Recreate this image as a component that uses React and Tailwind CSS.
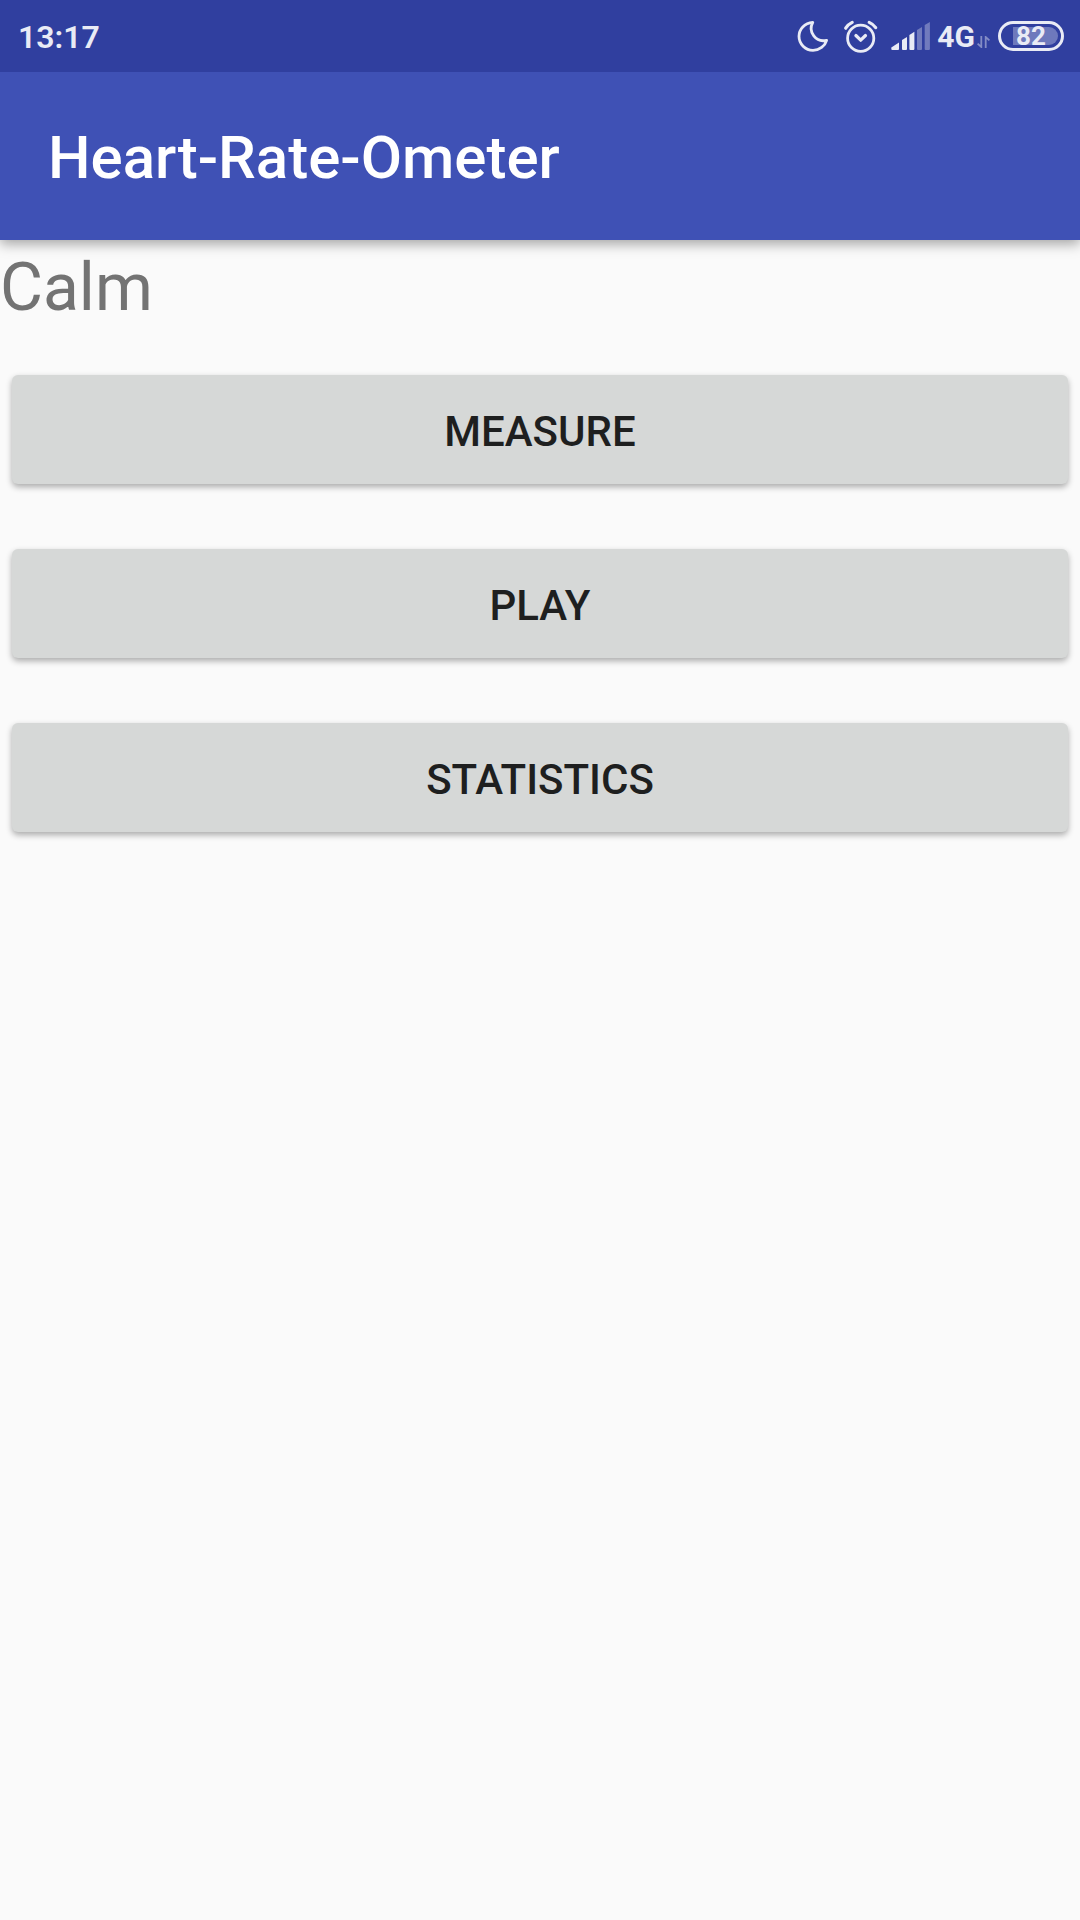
const actions = ["Measure", "Play", "Statistics"];

function MoonIcon() {
  return (
    <svg className="size-9" viewBox="0 0 36 36" fill="none" stroke="currentColor" strokeWidth="2.8" strokeLinejoin="round" role="img" aria-label="Do not disturb">
      <path d="M17.8 4.4C9.5 5 4 11.3 4 18.3C4 26 10.3 32.3 18 32.3C24.5 32.3 30 28 31.6 22.3A12.3 12.3 0 0 1 17.8 4.4Z" />
    </svg>
  );
}

function AlarmIcon() {
  return (
    <svg className="size-9" viewBox="0 0 36 36" fill="none" stroke="currentColor" strokeWidth="2.8" strokeLinecap="round" strokeLinejoin="round" role="img" aria-label="Alarm">
      <circle cx="17.7" cy="20.3" r="13.1" />
      <path strokeWidth="3.2" d="M2.7 10.2Q5 6.4 9.2 4.4M26.2 4.4Q30.4 6.2 32.7 9.6" />
      <path strokeWidth="3.2" d="M12.9 17.5L17.7 22.2L22.5 17.5" />
    </svg>
  );
}

function SignalIcon() {
  return (
    <svg className="h-7 w-10" viewBox="0 0 40 28" fill="currentColor" role="img" aria-label="Signal strength">
      <path d="M0.3 27V25.4L8 20.6V27Q8 28 7 28H1.3Q0.3 28 0.3 27Z" />
      <path d="M11 27V18L16 15V27Q16 28 15 28H12Q11 28 11 27Z" />
      <path d="M18.4 27V13L23.4 9.8V27Q23.4 28 22.4 28H19.4Q18.4 28 18.4 27Z" />
      <g opacity=".35">
        <path d="M26 27V8L31 5V27Q31 28 30 28H27Q26 28 26 27Z" />
        <path d="M33.7 27V3L38.9 0V27Q38.9 28 37.9 28H34.7Q33.7 28 33.7 27Z" />
      </g>
    </svg>
  );
}

function DataArrows() {
  return (
    <svg className="mt-3 h-3 w-[13px]" viewBox="0 0 13 12" fill="none" stroke="currentColor" strokeWidth="1.8" opacity=".45" aria-hidden="true">
      <path d="M4.3 0V11L0.6 7.6M8.7 12V1L12.4 4.4" />
    </svg>
  );
}

function Battery({ level }) {
  return (
    <div className="relative flex h-[30px] w-[66px] items-center justify-center rounded-full border-[3px] border-current">
      <span className="absolute inset-y-[3px] left-3 right-[3px] rounded-l-xs rounded-r-full bg-white/30" />
      <span className="relative text-[26px] font-bold leading-none">{level}</span>
    </div>
  );
}

function StatusBar() {
  return (
    <div className="relative z-10 flex h-[72px] items-center justify-between bg-[#303f9f] pl-[18px] pr-4 text-[#e9ebf5]">
      <span className="pt-px text-[32px] font-semibold leading-10">13:17</span>
      <div className="flex items-center">
        <div className="flex items-center gap-3">
          <MoonIcon />
          <AlarmIcon />
          <SignalIcon />
        </div>
        <span className="ml-1.5 mr-0.5 pt-0.5 text-[30px] font-bold leading-9">4G</span>
        <DataArrows />
        <div className="ml-2">
          <Battery level={82} />
        </div>
      </div>
    </div>
  );
}

export default function App() {
  return (
    <div className="min-h-screen bg-[#fafafa] font-[Roboto,sans-serif]">
      <StatusBar />
      <header className="flex h-[168px] items-center bg-[#3f51b5] px-12 pt-1 shadow-[0_4px_12px_rgba(0,0,0,0.35)]">
        <h1 className="text-[60px] font-medium leading-[72px] text-white">Heart-Rate-Ometer</h1>
      </header>
      <main>
        <p className="pt-1 text-[66px] leading-[88px] text-[#737373]">Calm</p>
        <div className="flex flex-col gap-[65px] px-3 pt-[43px]">
          {actions.map((label) => (
            <button
              key={label}
              type="button"
              className="h-[109px] rounded-md bg-[#d6d8d7] pt-1 text-[42px] font-medium uppercase leading-[50px] text-[#1e1f1f] shadow-[0_3px_6px_rgba(0,0,0,0.32)]"
            >
              {label}
            </button>
          ))}
        </div>
      </main>
    </div>
  );
}
